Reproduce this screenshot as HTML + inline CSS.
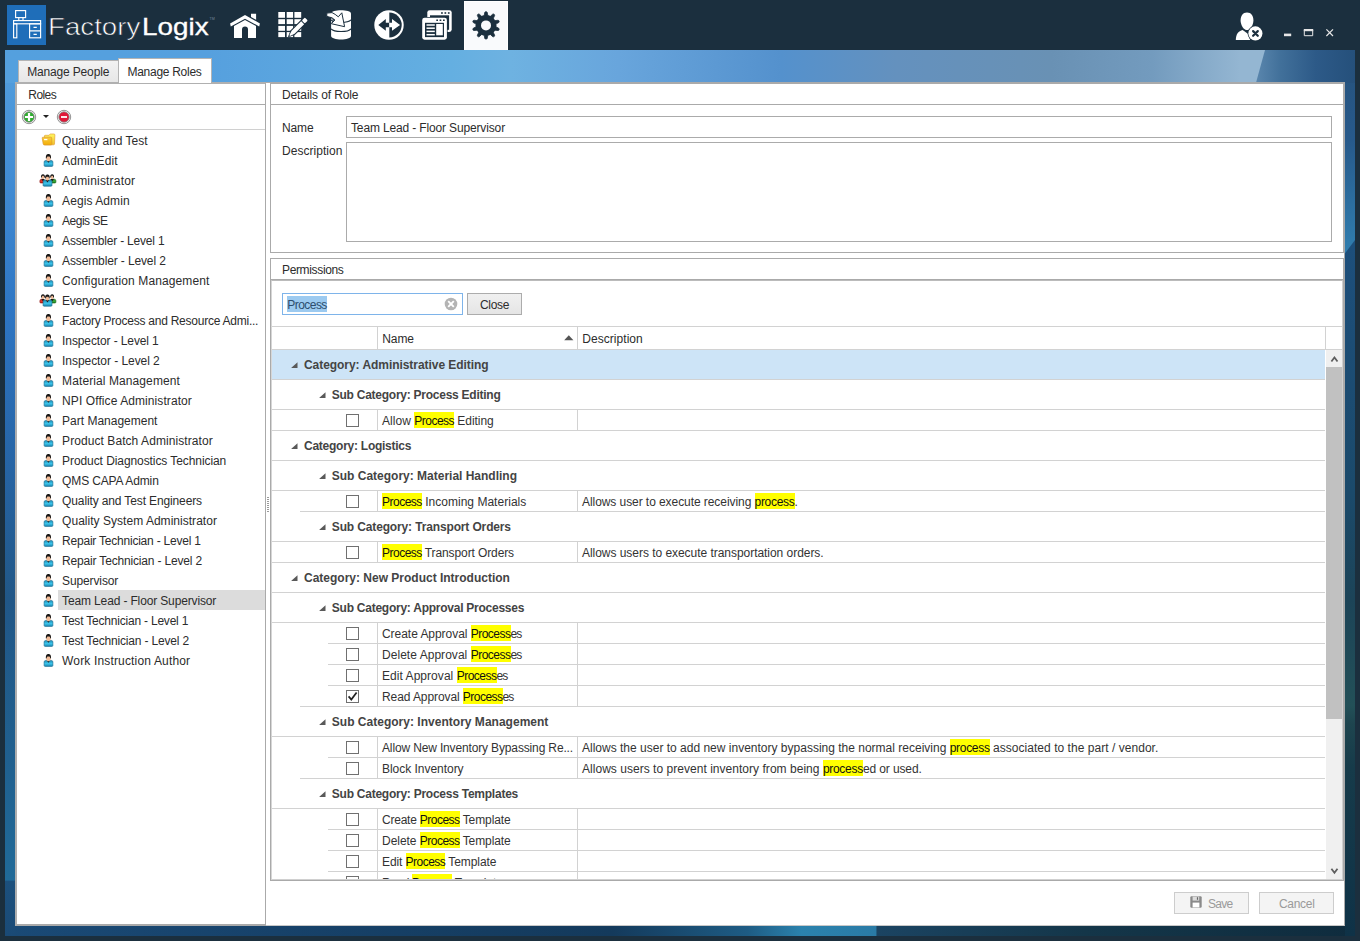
<!DOCTYPE html>
<html><head><meta charset="utf-8"><title>FactoryLogix</title>
<style>
*{box-sizing:border-box;margin:0;padding:0}
html,body{width:1360px;height:941px;overflow:hidden}
body{position:relative;background:#1b2f3e;font-family:"Liberation Sans",sans-serif;font-size:12px;color:#2c2c2c;-webkit-font-smoothing:antialiased}
.abs{position:absolute}
#hdr{position:absolute;left:0;top:0;width:1360px;height:50px;background:#1b2f3e}
#bg{position:absolute;left:5px;top:50px;width:1350px;height:886px}
.t{position:absolute;white-space:nowrap;line-height:16px;height:16px;letter-spacing:-0.1px}
.b{font-weight:bold;color:#444}
.line{position:absolute;background:#d4d4d4;height:1px}
.vline{position:absolute;background:#d4d4d4;width:1px}
.hl{background:#ffff00;color:#111;display:inline-block;height:16px;line-height:18px;vertical-align:top}
.cb{position:absolute;width:13px;height:13px;border:1px solid #707070;background:#fff}
</style></head>
<body>

<svg id="bg" class="abs" width="1350" height="886" viewBox="5 50 1350 886" style="left:5px;top:50px">
<defs>
<linearGradient id="gt" x1="5" x2="1355" y1="0" y2="0" gradientUnits="userSpaceOnUse">
<stop offset="0" stop-color="#54a0de"/>
<stop offset="0.15" stop-color="#56a0de"/>
<stop offset="0.33" stop-color="#64afe1"/>
<stop offset="0.375" stop-color="#6eb2e1"/>
<stop offset="0.455" stop-color="#68a5dc"/>
<stop offset="0.575" stop-color="#5491cd"/>
<stop offset="0.66" stop-color="#6491be"/>
<stop offset="0.775" stop-color="#6991b4"/>
<stop offset="0.85" stop-color="#739bbe"/>
<stop offset="0.915" stop-color="#94b6d2"/>
<stop offset="1" stop-color="#94b6d2"/>
</linearGradient>
<linearGradient id="gr" x1="1256" x2="1355" y1="0" y2="0" gradientUnits="userSpaceOnUse">
<stop offset="0" stop-color="#5a86ad"/>
<stop offset="0.25" stop-color="#41709a"/>
<stop offset="0.6" stop-color="#2d5a88"/>
<stop offset="1" stop-color="#25507b"/>
</linearGradient>
<linearGradient id="gl" x1="0" x2="0" y1="50" y2="936" gradientUnits="userSpaceOnUse">
<stop offset="0" stop-color="#54a0de"/>
<stop offset="0.12" stop-color="#4590d6"/>
<stop offset="0.29" stop-color="#2e76c4"/>
<stop offset="0.45" stop-color="#2766a8"/>
<stop offset="0.62" stop-color="#215787"/>
<stop offset="0.8" stop-color="#20608f"/>
<stop offset="0.937" stop-color="#206a98"/>
<stop offset="0.938" stop-color="#1c507d"/>
<stop offset="1" stop-color="#1a4a76"/>
</linearGradient>
<linearGradient id="grt" x1="0" x2="0" y1="50" y2="936" gradientUnits="userSpaceOnUse">
<stop offset="0" stop-color="#26527c"/>
<stop offset="0.1" stop-color="#27598a"/>
<stop offset="0.215" stop-color="#2f7aab"/>
<stop offset="0.24" stop-color="#3080b0"/>
<stop offset="0.5" stop-color="#1b4a6b"/>
<stop offset="0.62" stop-color="#1c4458"/>
<stop offset="0.74" stop-color="#235058"/>
<stop offset="0.76" stop-color="#1e454f"/>
<stop offset="0.81" stop-color="#163b4a"/>
<stop offset="1" stop-color="#0f3247"/>
</linearGradient>
<linearGradient id="grt2" x1="0" x2="0" y1="50" y2="936" gradientUnits="userSpaceOnUse">
<stop offset="0.21" stop-color="#1d4f7c"/>
<stop offset="0.5" stop-color="#1b4a6b"/>
<stop offset="0.62" stop-color="#1c4458"/>
<stop offset="0.74" stop-color="#235058"/>
<stop offset="0.76" stop-color="#1e454f"/>
<stop offset="0.81" stop-color="#163b4a"/>
<stop offset="1" stop-color="#0f3247"/>
</linearGradient>
<linearGradient id="gb" x1="5" x2="1355" y1="0" y2="0" gradientUnits="userSpaceOnUse">
<stop offset="0" stop-color="#1a4a76"/>
<stop offset="0.2" stop-color="#17426a"/>
<stop offset="0.45" stop-color="#143a5c"/>
<stop offset="0.55" stop-color="#1e5c84"/>
<stop offset="0.59" stop-color="#2b82ad"/>
<stop offset="0.645" stop-color="#2a7ba6"/>
<stop offset="0.646" stop-color="#1b4462"/>
<stop offset="0.8" stop-color="#143649"/>
<stop offset="1" stop-color="#0f2c3e"/>
</linearGradient>
</defs>
<rect x="5" y="50" width="1350" height="886" fill="url(#gt)"/>
<polygon points="1265,50 1355,50 1355,90 1254,90" fill="url(#gr)"/>
<rect x="5" y="83" width="12" height="853" fill="url(#gl)"/>
<rect x="1343" y="83" width="12" height="180" fill="url(#grt)"/>
<polygon points="1343,256 1355,240 1355,936 1343,936" fill="url(#grt2)"/>
<rect x="15" y="924" width="1330" height="12" fill="url(#gb)"/>
</svg>
<svg class="abs" width="0" height="0" style="left:0;top:0"><defs><linearGradient id="ub" x1="0" x2="0" y1="0" y2="1"><stop offset="0" stop-color="#1b86b0"/><stop offset="0.55" stop-color="#3cc4ea"/><stop offset="1" stop-color="#1b86b0"/></linearGradient><linearGradient id="ur" x1="0" x2="0" y1="0" y2="1"><stop offset="0" stop-color="#b01810"/><stop offset="0.55" stop-color="#f03a2e"/><stop offset="1" stop-color="#b01810"/></linearGradient><linearGradient id="ug" x1="0" x2="0" y1="0" y2="1"><stop offset="0" stop-color="#1c7a1c"/><stop offset="0.55" stop-color="#3cb03c"/><stop offset="1" stop-color="#1c7a1c"/></linearGradient><linearGradient id="ufg" x1="0" x2="0" y1="0" y2="1"><stop offset="0" stop-color="#f9cc40"/><stop offset="1" stop-color="#f3ae06"/></linearGradient><linearGradient id="ufb" x1="0" x2="0" y1="0" y2="1"><stop offset="0" stop-color="#fff85e"/><stop offset="1" stop-color="#f2c02c"/></linearGradient></defs></svg><div id="hdr"><svg class="abs" style="left:0;top:0" width="1360" height="50" viewBox="0 0 1360 50"><rect x="7" y="5" width="39" height="40" fill="#1f6eb9"/><g fill="none" stroke="#fff" stroke-width="1.15"><rect x="15.6" y="10.6" width="10" height="7"/><path d="M18.8 17.6V20.3M23 17.6V20.3"/><rect x="13.6" y="20.6" width="27" height="3.2"/><rect x="13.6" y="23.8" width="3.2" height="14"/><rect x="29.6" y="23.8" width="11" height="14"/><path d="M29.6 30.8H40.6M33.5 27.4H36.8M33.5 34.4H36.8"/></g><g fill="#fff"><polygon points="230.1,23.4 245,15 259.9,23.4 259.2,26.4 245,18.7 230.8,26.4"/><path d="M234 25.9 L245 19.9 L256 25.9 V38 H248 V29.4 A3 3 0 0 0 242 29.4 V38 H234Z"/><polygon points="251,13.8 256.1,13.8 256.1,19.8 251,17.1"/></g><g fill="#fff"><rect x="278.3" y="12" width="6.7" height="5.8"/><rect x="278.3" y="19.2" width="6.7" height="4.9"/><rect x="278.3" y="25.9" width="6.7" height="4.9"/><rect x="278.3" y="32.1" width="6.7" height="5.0"/><rect x="286.7" y="12" width="6.4" height="5.8"/><rect x="286.7" y="19.2" width="6.4" height="4.9"/><rect x="286.7" y="25.9" width="6.4" height="4.9"/><rect x="286.7" y="32.1" width="6.4" height="5.0"/><rect x="294.4" y="12" width="6.8" height="5.8"/><rect x="294.4" y="19.2" width="6.8" height="4.9"/><rect x="294.4" y="25.9" width="6.8" height="4.9"/><rect x="294.4" y="32.1" width="6.8" height="5.0"/></g><g transform="translate(288.3,37) rotate(-45)"><path d="M-0.8 0 L6.5 -3.2 H26.5 V3.2 H6.5Z" fill="#1b2f3e"/><path d="M0.4 0 L6.8 -2.1 H20.3 V2.1 H6.8Z" fill="#fff"/><path d="M0.4 0 L2 -0.7 V0.7Z" fill="#1b2f3e"/><rect x="21.2" y="-2.1" width="4.3" height="4.2" rx="1" fill="#fff"/></g><g><path d="M331.1 13.5 C331.1 9.2 351 9.2 351 13.5 V36 C351 40.6 331.1 40.6 331.1 36Z" fill="#fff"/><path d="M331.1 19.8 C334 23.2 348 23.2 351 19.8 M331.1 28.8 C334 32.4 348 32.4 351 28.8" fill="none" stroke="#1b2f3e" stroke-width="1.1"/><path d="M326.8 13.1 L332 12.6 L335.2 14.4 L338.3 16.8 L341.8 12.8 L344.6 26.7 L331.3 23.7 L334.8 20 L332 17.8 L326.8 16.4Z" fill="#fff" stroke="#1b2f3e" stroke-width="1" stroke-linejoin="miter"/><path d="M331.5 18.5 L334.6 20 L331.6 22.6" fill="none" stroke="#1b2f3e" stroke-width="0.9"/></g><g><circle cx="389" cy="25" r="14.7" fill="#fff"/><path d="M389.3 12.6 A12.4 12.4 0 0 1 389.3 37.4Z" fill="#1b2f3e"/><path d="M378.3 25 L385.8 19 V22.7 H389.3 V27.2 H385.8 V30.8Z" fill="#1b2f3e"/><path d="M400.1 25 L392 19 V22.7 H389.2 V27.2 H392 V30.8Z" fill="#fff"/></g><g><rect x="427.3" y="10.2" width="24.4" height="21.8" rx="2.4" fill="#fff"/><rect x="430" y="15.3" width="19.1" height="14.5" fill="#1b2f3e"/><rect x="441.1" y="12.2" width="1.7" height="1.6" fill="#1b2f3e"/><rect x="444.5" y="12.2" width="1.7" height="1.6" fill="#1b2f3e"/><rect x="447.9" y="12.2" width="1.7" height="1.6" fill="#1b2f3e"/><rect x="421.5" y="17" width="26.1" height="23.4" rx="3" fill="#1b2f3e"/><rect x="422.2" y="17.7" width="24.7" height="22" rx="2.4" fill="#fff"/><rect x="425" y="22.8" width="19" height="14.3" fill="#1b2f3e"/><rect x="436.3" y="19.5" width="1.7" height="1.5" fill="#1b2f3e"/><rect x="439.6" y="19.5" width="1.7" height="1.5" fill="#1b2f3e"/><rect x="443.0" y="19.5" width="1.7" height="1.5" fill="#1b2f3e"/><rect x="426.5" y="24.25" width="8.3" height="1.5" fill="#fff"/><rect x="426.5" y="27.45" width="8.3" height="1.5" fill="#fff"/><rect x="426.5" y="30.65" width="8.3" height="1.5" fill="#fff"/><rect x="426.5" y="33.95" width="8.3" height="1.5" fill="#fff"/><rect x="436.2" y="24" width="6.6" height="11.3" fill="#fff"/></g><rect x="464.5" y="1.5" width="43" height="49" fill="#f9fafc" stroke="#fff" stroke-width="1"/><path d="M483.67 15.68 L484.18 15.57 L484.81 12.35 L485.44 11.71 L486.56 11.71 L487.19 12.35 L487.82 15.57 L489.83 16.16 L490.31 16.37 L492.71 14.15 L493.59 14.00 L494.50 14.65 L494.63 15.54 L493.25 18.52 L494.53 20.18 L494.79 20.63 L498.04 20.24 L498.85 20.64 L499.19 21.70 L498.77 22.50 L495.91 24.09 L495.97 26.18 L495.91 26.71 L498.77 28.30 L499.19 29.10 L498.85 30.16 L498.04 30.56 L494.79 30.17 L493.60 31.89 L493.25 32.28 L494.63 35.26 L494.50 36.15 L493.59 36.80 L492.71 36.65 L490.31 34.43 L488.33 35.12 L487.82 35.23 L487.19 38.45 L486.56 39.09 L485.44 39.09 L484.81 38.45 L484.18 35.23 L482.17 34.64 L481.69 34.43 L479.29 36.65 L478.41 36.80 L477.50 36.15 L477.37 35.26 L478.75 32.28 L477.47 30.62 L477.21 30.17 L473.96 30.56 L473.15 30.16 L472.81 29.10 L473.23 28.30 L476.09 26.71 L476.03 24.62 L476.09 24.09 L473.23 22.50 L472.81 21.70 L473.15 20.64 L473.96 20.24 L477.21 20.63 L478.40 18.91 L478.75 18.52 L477.37 15.54 L477.50 14.65 L478.41 14.00 L479.29 14.15 L481.69 16.37Z" fill="#1b2f3e" stroke="#1b2f3e" stroke-width="0.8" stroke-linejoin="round"/><circle cx="486" cy="25.4" r="10.2" fill="#1b2f3e"/><circle cx="486" cy="25.4" r="5" fill="#f9fafc"/><g><path d="M1247 12.6 C1251.2 12.6 1253.4 16 1253.4 20.5 C1253.4 25.5 1250 30.1 1247 30.1 C1244 30.1 1240.6 25.5 1240.6 20.5 C1240.6 16 1242.8 12.6 1247 12.6Z" fill="#fff"/><path d="M1235.8 39.9 C1236 33.5 1238.5 31.2 1242.6 29.9 L1248.2 34 L1250.2 39.9Z" fill="#fff"/><circle cx="1255.4" cy="33.4" r="7.8" fill="#1b2f3e"/><circle cx="1255.4" cy="33.4" r="7.05" fill="#fff"/><path d="M1253.1 31.1 L1257.8 35.8 M1257.8 31.1 L1253.1 35.8" stroke="#1b2f3e" stroke-width="2.2" stroke-linecap="round"/></g><rect x="1284" y="33.6" width="7.2" height="2.6" fill="#e6e6e6"/><path d="M1304.3 30 H1312.7 V35.7 H1304.3Z" fill="none" stroke="#e6e6e6" stroke-width="1"/><rect x="1303.8" y="29" width="9.4" height="2.2" fill="#e6e6e6"/><path d="M1326.4 29.4 L1333 36 M1333 29.4 L1326.4 36" stroke="#e6e6e6" stroke-width="1.2"/></svg><div class="abs" style="left:48.2px;top:11px;height:32px;line-height:32px;font-size:23.4px;color:#fff;white-space:nowrap"><span style="display:inline-block;transform-origin:0 50%;transform:scaleX(1.184);-webkit-text-stroke:0.6px #1b2f3e">Factory</span></div><div class="abs" style="left:141.9px;top:11px;height:32px;line-height:32px;font-size:23.4px;color:#fff;white-space:nowrap"><span style="display:inline-block;transform-origin:0 50%;transform:scaleX(1.19);-webkit-text-stroke:0.3px #fff">Logix</span></div><div class="abs" style="left:209.5px;top:17px;font-size:3.6px;line-height:5px;color:#74889a;letter-spacing:0">TM</div></div><div class="abs" style="left:266px;top:82px;width:1079px;height:844px;background:#fff;border-top:1px solid #aaa;border-right:1px solid #aaa;border-bottom:1px solid #c8c8c8"></div><div class="abs" style="left:270px;top:83px;width:1074px;height:170px;border:1px solid #aaa;background:#fff"></div><div class="t" style="left:282px;top:87px;"><span style="letter-spacing:-0.110px;">Details of Role</span></div><div class="abs" style="left:271px;top:104px;width:1072px;height:1px;background:#aaa"></div><div class="t" style="left:282px;top:120px;"><span style="letter-spacing:-0.129px;">Name</span></div><div class="abs" style="left:346px;top:116px;width:986px;height:22px;border:1px solid #ababab;background:#fff"></div><div class="t" style="left:351px;top:120px;"><span style="letter-spacing:-0.146px;">Team Lead - Floor Supervisor</span></div><div class="t" style="left:282px;top:143px;"><span style="letter-spacing:0.043px;">Description</span></div><div class="abs" style="left:346px;top:142px;width:986px;height:100px;border:1px solid #ababab;background:#fff"></div><div class="abs" style="left:270px;top:258px;width:1074px;height:623px;border:1px solid #aaa;background:#fff"></div><div class="t" style="left:282px;top:262px;"><span style="letter-spacing:-0.351px;">Permissions</span></div><div class="abs" style="left:271px;top:279px;width:1072px;height:1px;background:#aaa"></div><div class="abs" style="left:271px;top:280px;width:1072px;height:600px;border:1px solid #d0d0d0;border-top-color:#bbb;border-left-color:#d6d6d6"></div><div class="abs" style="left:282px;top:293px;width:181px;height:22px;border:1px solid #7eb4ea;background:#fff"></div><div class="abs" style="left:287px;top:296px;width:40px;height:16px;background:#9ccaf0"></div><div class="t" style="left:287.3px;top:297px;color:#2d4d6d;"><span style="letter-spacing:-0.551px;">Process</span></div><svg class="abs" style="left:444px;top:297px" width="14" height="14" viewBox="-7 -7 14 14"><circle r="6.3" fill="#b4b4b4"/><path d="M-2.8 -2.8 L2.8 2.8 M2.8 -2.8 L-2.8 2.8" stroke="#fff" stroke-width="1.9"/></svg><div class="abs" style="left:467px;top:293px;width:55px;height:22px;border:1px solid #acacac;background:linear-gradient(#f0f0f0,#e5e5e5)"></div><div class="t" style="left:480px;top:297px;"><span style="letter-spacing:-0.338px;">Close</span></div><div class="line" style="left:272px;top:326px;width:1070px;background:#d2d2d2"></div><div class="line" style="left:272px;top:349px;width:1070px;background:#d2d2d2"></div><div class="vline" style="left:377px;top:327px;height:22px;background:#d2d2d2"></div><div class="vline" style="left:577px;top:327px;height:22px;background:#d2d2d2"></div><div class="vline" style="left:1325px;top:327px;height:22px;background:#d2d2d2"></div><div class="t" style="left:382.3px;top:331px;"><span style="letter-spacing:-0.129px;">Name</span></div><div class="t" style="left:582.3px;top:331px;"><span style="letter-spacing:0.043px;">Description</span></div><svg class="abs" style="left:564px;top:335px" width="10" height="6" viewBox="0 0 10 6"><path d="M0.2 5.2 L4.8 0.2 L9.4 5.2Z" fill="#555"/></svg><div class="abs" style="left:0;top:0;width:1360px;height:879px;overflow:hidden"><div class="abs" style="left:272px;top:350px;width:1053px;height:29px;background:#cde4f7"></div><svg class="abs" style="left:291px;top:362px" width="7" height="7" viewBox="0 0 7 7"><path d="M6.5 0.2 V6 H0.1Z" fill="#595959"/></svg><div class="t b" style="left:304px;top:357px;"><span style="letter-spacing:-0.052px;">Category: Administrative Editing</span></div><div class="line" style="left:272px;top:379px;width:1053px;background:#d2d2d2"></div><svg class="abs" style="left:319px;top:392px" width="7" height="7" viewBox="0 0 7 7"><path d="M6.5 0.2 V6 H0.1Z" fill="#595959"/></svg><div class="t b" style="left:331.8px;top:387px;"><span style="letter-spacing:-0.253px;">Sub Category: Process Editing</span></div><div class="line" style="left:272px;top:409px;width:1053px;background:#d2d2d2"></div><div class="cb" style="left:346px;top:414px"></div><div class="vline" style="left:377px;top:410px;height:20px;background:#d2d2d2"></div><div class="vline" style="left:577px;top:410px;height:20px;background:#d2d2d2"></div><div class="t" style="left:382px;top:412px;color:#333;line-height:18px;height:18px;"><span style="letter-spacing:0.047px;">Allow </span><span class="hl" style="letter-spacing:-0.508px;">Process</span><span style="letter-spacing:-0.066px;"> Editing</span></div><div class="line" style="left:272px;top:430px;width:1053px;background:#d2d2d2"></div><svg class="abs" style="left:291px;top:443px" width="7" height="7" viewBox="0 0 7 7"><path d="M6.5 0.2 V6 H0.1Z" fill="#595959"/></svg><div class="t b" style="left:304px;top:438px;"><span style="letter-spacing:-0.254px;">Category: Logistics</span></div><div class="line" style="left:272px;top:460px;width:1053px;background:#d2d2d2"></div><svg class="abs" style="left:319px;top:473px" width="7" height="7" viewBox="0 0 7 7"><path d="M6.5 0.2 V6 H0.1Z" fill="#595959"/></svg><div class="t b" style="left:331.8px;top:468px;"><span style="letter-spacing:-0.005px;">Sub Category: Material Handling</span></div><div class="line" style="left:272px;top:490px;width:1053px;background:#d2d2d2"></div><div class="cb" style="left:346px;top:495px"></div><div class="vline" style="left:377px;top:491px;height:20px;background:#d2d2d2"></div><div class="vline" style="left:577px;top:491px;height:20px;background:#d2d2d2"></div><div class="t" style="left:382px;top:493px;color:#333;line-height:18px;height:18px;"><span class="hl" style="letter-spacing:-0.508px;">Process</span><span style="letter-spacing:0.024px;"> Incoming Materials</span></div><div class="t" style="left:582px;top:493px;color:#333;line-height:18px;height:18px;"><span style="letter-spacing:-0.068px;">Allows user to execute receiving </span><span class="hl" style="letter-spacing:-0.290px;">process</span><span style="letter-spacing:-0.544px;">.</span></div><div class="line" style="left:300px;top:511px;width:1025px;background:#d2d2d2"></div><svg class="abs" style="left:319px;top:524px" width="7" height="7" viewBox="0 0 7 7"><path d="M6.5 0.2 V6 H0.1Z" fill="#595959"/></svg><div class="t b" style="left:331.8px;top:519px;"><span style="letter-spacing:-0.142px;">Sub Category: Transport Orders</span></div><div class="line" style="left:272px;top:541px;width:1053px;background:#d2d2d2"></div><div class="cb" style="left:346px;top:546px"></div><div class="vline" style="left:377px;top:542px;height:20px;background:#d2d2d2"></div><div class="vline" style="left:577px;top:542px;height:20px;background:#d2d2d2"></div><div class="t" style="left:382px;top:544px;color:#333;line-height:18px;height:18px;"><span class="hl" style="letter-spacing:-0.508px;">Process</span><span style="letter-spacing:-0.108px;"> Transport Orders</span></div><div class="t" style="left:582px;top:544px;color:#333;line-height:18px;height:18px;"><span style="letter-spacing:-0.040px;">Allows users to execute transportation orders.</span></div><div class="line" style="left:272px;top:562px;width:1053px;background:#d2d2d2"></div><svg class="abs" style="left:291px;top:575px" width="7" height="7" viewBox="0 0 7 7"><path d="M6.5 0.2 V6 H0.1Z" fill="#595959"/></svg><div class="t b" style="left:304px;top:570px;"><span style="letter-spacing:-0.003px;">Category: New Product Introduction</span></div><div class="line" style="left:272px;top:592px;width:1053px;background:#d2d2d2"></div><svg class="abs" style="left:319px;top:605px" width="7" height="7" viewBox="0 0 7 7"><path d="M6.5 0.2 V6 H0.1Z" fill="#595959"/></svg><div class="t b" style="left:331.8px;top:600px;"><span style="letter-spacing:-0.248px;">Sub Category: Approval Processes</span></div><div class="line" style="left:272px;top:622px;width:1053px;background:#d2d2d2"></div><div class="cb" style="left:346px;top:627px"></div><div class="vline" style="left:377px;top:623px;height:20px;background:#d2d2d2"></div><div class="vline" style="left:577px;top:623px;height:20px;background:#d2d2d2"></div><div class="t" style="left:382px;top:625px;color:#333;line-height:18px;height:18px;"><span style="letter-spacing:-0.043px;">Create Approval </span><span class="hl" style="letter-spacing:-0.508px;">Process</span><span style="letter-spacing:-0.944px;">es</span></div><div class="line" style="left:328px;top:643px;width:997px;background:#d2d2d2"></div><div class="cb" style="left:346px;top:648px"></div><div class="vline" style="left:377px;top:644px;height:20px;background:#d2d2d2"></div><div class="vline" style="left:577px;top:644px;height:20px;background:#d2d2d2"></div><div class="t" style="left:382px;top:646px;color:#333;line-height:18px;height:18px;"><span style="letter-spacing:0.040px;">Delete Approval </span><span class="hl" style="letter-spacing:-0.508px;">Process</span><span style="letter-spacing:-0.944px;">es</span></div><div class="line" style="left:328px;top:664px;width:997px;background:#d2d2d2"></div><div class="cb" style="left:346px;top:669px"></div><div class="vline" style="left:377px;top:665px;height:20px;background:#d2d2d2"></div><div class="vline" style="left:577px;top:665px;height:20px;background:#d2d2d2"></div><div class="t" style="left:382px;top:667px;color:#333;line-height:18px;height:18px;"><span style="letter-spacing:0.047px;">Edit Approval </span><span class="hl" style="letter-spacing:-0.508px;">Process</span><span style="letter-spacing:-0.944px;">es</span></div><div class="line" style="left:328px;top:685px;width:997px;background:#d2d2d2"></div><div class="cb" style="left:346px;top:690px"><svg width="11" height="11" viewBox="0 0 11 11" style="position:absolute;left:0;top:0"><path d="M1.6 5.4 L4.3 8.6 L9.6 1.4" fill="none" stroke="#222" stroke-width="1.7"/></svg></div><div class="vline" style="left:377px;top:686px;height:20px;background:#d2d2d2"></div><div class="vline" style="left:577px;top:686px;height:20px;background:#d2d2d2"></div><div class="t" style="left:382px;top:688px;color:#333;line-height:18px;height:18px;"><span style="letter-spacing:-0.090px;">Read Approval </span><span class="hl" style="letter-spacing:-0.508px;">Process</span><span style="letter-spacing:-0.944px;">es</span></div><div class="line" style="left:300px;top:706px;width:1025px;background:#d2d2d2"></div><svg class="abs" style="left:319px;top:719px" width="7" height="7" viewBox="0 0 7 7"><path d="M6.5 0.2 V6 H0.1Z" fill="#595959"/></svg><div class="t b" style="left:331.8px;top:714px;"><span style="letter-spacing:0.016px;">Sub Category: Inventory Management</span></div><div class="line" style="left:272px;top:736px;width:1053px;background:#d2d2d2"></div><div class="cb" style="left:346px;top:741px"></div><div class="vline" style="left:377px;top:737px;height:20px;background:#d2d2d2"></div><div class="vline" style="left:577px;top:737px;height:20px;background:#d2d2d2"></div><div class="t" style="left:382px;top:739px;color:#333;line-height:18px;height:18px;"><span style="letter-spacing:-0.146px;">Allow New Inventory Bypassing Re...</span></div><div class="t" style="left:582px;top:739px;color:#333;line-height:18px;height:18px;"><span style="letter-spacing:0.002px;">Allows the user to add new inventory bypassing the normal receiving </span><span class="hl" style="letter-spacing:-0.290px;">process</span><span style="letter-spacing:0.038px;"> associated to the part / vendor.</span></div><div class="line" style="left:328px;top:757px;width:997px;background:#d2d2d2"></div><div class="cb" style="left:346px;top:762px"></div><div class="vline" style="left:377px;top:758px;height:20px;background:#d2d2d2"></div><div class="vline" style="left:577px;top:758px;height:20px;background:#d2d2d2"></div><div class="t" style="left:382px;top:760px;color:#333;line-height:18px;height:18px;"><span style="letter-spacing:-0.030px;">Block Inventory</span></div><div class="t" style="left:582px;top:760px;color:#333;line-height:18px;height:18px;"><span style="letter-spacing:0.032px;">Allows users to prevent inventory from being </span><span class="hl" style="letter-spacing:-0.290px;">process</span><span style="letter-spacing:-0.113px;">ed or used.</span></div><div class="line" style="left:300px;top:778px;width:1025px;background:#d2d2d2"></div><svg class="abs" style="left:319px;top:791px" width="7" height="7" viewBox="0 0 7 7"><path d="M6.5 0.2 V6 H0.1Z" fill="#595959"/></svg><div class="t b" style="left:331.8px;top:786px;"><span style="letter-spacing:-0.247px;">Sub Category: Process Templates</span></div><div class="line" style="left:272px;top:808px;width:1053px;background:#d2d2d2"></div><div class="cb" style="left:346px;top:813px"></div><div class="vline" style="left:377px;top:809px;height:20px;background:#d2d2d2"></div><div class="vline" style="left:577px;top:809px;height:20px;background:#d2d2d2"></div><div class="t" style="left:382px;top:811px;color:#333;line-height:18px;height:18px;"><span style="letter-spacing:-0.223px;">Create </span><span class="hl" style="letter-spacing:-0.508px;">Process</span><span style="letter-spacing:-0.079px;"> Template</span></div><div class="line" style="left:328px;top:829px;width:997px;background:#d2d2d2"></div><div class="cb" style="left:346px;top:834px"></div><div class="vline" style="left:377px;top:830px;height:20px;background:#d2d2d2"></div><div class="vline" style="left:577px;top:830px;height:20px;background:#d2d2d2"></div><div class="t" style="left:382px;top:832px;color:#333;line-height:18px;height:18px;"><span style="letter-spacing:-0.033px;">Delete </span><span class="hl" style="letter-spacing:-0.508px;">Process</span><span style="letter-spacing:-0.079px;"> Template</span></div><div class="line" style="left:328px;top:850px;width:997px;background:#d2d2d2"></div><div class="cb" style="left:346px;top:855px"></div><div class="vline" style="left:377px;top:851px;height:20px;background:#d2d2d2"></div><div class="vline" style="left:577px;top:851px;height:20px;background:#d2d2d2"></div><div class="t" style="left:382px;top:853px;color:#333;line-height:18px;height:18px;"><span style="letter-spacing:-0.103px;">Edit </span><span class="hl" style="letter-spacing:-0.508px;">Process</span><span style="letter-spacing:-0.079px;"> Template</span></div><div class="line" style="left:328px;top:871px;width:997px;background:#d2d2d2"></div><div class="cb" style="left:346px;top:876px"></div><div class="vline" style="left:377px;top:872px;height:20px;background:#d2d2d2"></div><div class="vline" style="left:577px;top:872px;height:20px;background:#d2d2d2"></div><div class="t" style="left:382px;top:874px;color:#333;line-height:18px;height:18px;"><span style="letter-spacing:-0.426px;">Read </span><span class="hl" style="letter-spacing:-0.508px;">Process</span><span style="letter-spacing:-0.079px;"> Template</span></div><div class="line" style="left:272px;top:892px;width:1053px;background:#d2d2d2"></div></div><div class="abs" style="left:1326px;top:350px;width:16px;height:529px;background:#f0f0f0"></div><div class="abs" style="left:1326px;top:367px;width:16px;height:352px;background:#c1c1c1"></div><svg class="abs" style="left:1330px;top:355px" width="10" height="8" viewBox="0 0 10 8"><path d="M1.4 6.5 L4.45 2.5 L7.5 6.5" fill="none" stroke="#5e5e5e" stroke-width="1.8"/></svg><svg class="abs" style="left:1330px;top:867px" width="10" height="8" viewBox="0 0 10 8"><path d="M1.4 1.7 L4.45 5.7 L7.5 1.7" fill="none" stroke="#5e5e5e" stroke-width="1.8"/></svg><div class="abs" style="left:1174px;top:892px;width:75px;height:22px;border:1px solid #cdcdcd;background:#f4f4f4"></div><svg class="abs" style="left:1190px;top:896px" width="12" height="12" viewBox="0 0 12 12"><rect x="0.3" y="0.3" width="11.4" height="11.4" rx="1.2" fill="#8a8a8a"/><rect x="2.6" y="0.6" width="6.6" height="4" fill="#dcdcdc"/><rect x="6.9" y="1.2" width="1.2" height="2.6" fill="#666"/><rect x="2.6" y="6.6" width="6.8" height="4.8" fill="#fff"/></svg><div class="t" style="left:1208px;top:896px;color:#9a9a9a;"><span style="letter-spacing:-0.715px;">Save</span></div><div class="abs" style="left:1259px;top:892px;width:75px;height:22px;border:1px solid #cdcdcd;background:#f4f4f4"></div><div class="t" style="left:1279px;top:896px;color:#9a9a9a;"><span style="letter-spacing:-0.310px;">Cancel</span></div><div class="abs" style="left:18px;top:60px;width:101px;height:24px;background:linear-gradient(#f2f2f2,#e6e6e6);border:1px solid #b4b4b4;border-bottom:none"></div><div class="t" style="left:27.2px;top:64px;"><span style="letter-spacing:-0.160px;">Manage People</span></div><div class="abs" style="left:118px;top:58px;width:94px;height:27px;background:#fff;border:1px solid #b4b4b4;border-bottom:none"></div><div class="t" style="left:127.5px;top:64px;"><span style="letter-spacing:-0.283px;">Manage Roles</span></div><div class="abs" style="left:15px;top:82px;width:251px;height:844px;background:#fff;border:1px solid #aaa;border-left:2px solid #aeaeae;border-top:2px solid #b0b0b0;border-bottom:2px solid #aaa"></div><div class="abs" style="left:119px;top:82px;width:92px;height:1px;background:#fff"></div><div class="t" style="left:28.3px;top:87px;"><span style="letter-spacing:-0.577px;">Roles</span></div><div class="abs" style="left:17px;top:104px;width:248px;height:1px;background:#aaa"></div><svg class="abs" style="left:21.0px;top:109.0px" width="16" height="16" viewBox="-8 -8 16 16"><circle r="6.7" fill="#f4f4f4" stroke="#7a7a7a" stroke-width="0.8"/><circle r="5.2" fill="#2fae2f" stroke="#8a8a8a" stroke-width="0.8"/><path d="M-1.1 -4 H1.1 V-1.1 H4 V1.1 H1.1 V4 H-1.1 V1.1 H-4 V-1.1 H-1.1Z" fill="#fff"/></svg><svg class="abs" style="left:42px;top:113px" width="8" height="6" viewBox="0 0 8 6"><path d="M1 2 H7 L4 5Z" fill="#222"/></svg><svg class="abs" style="left:56.0px;top:109.0px" width="16" height="16" viewBox="-8 -8 16 16"><circle r="6.7" fill="#f4f4f4" stroke="#7a7a7a" stroke-width="0.8"/><circle r="5.2" fill="#e01838" stroke="#8a8a8a" stroke-width="0.8"/><rect x="-3" y="-0.9" width="6" height="1.8" fill="#fff"/></svg><div class="abs" style="left:17px;top:129px;width:248px;height:1px;background:#d0d0d0"></div><svg class="abs" style="left:41px;top:133px" width="16" height="14" viewBox="0 0 16 14"><path d="M3.5 2.8 Q3.5 2.3 4 2.3 L8 2.3 L8.8 1.3 Q9 1 9.4 1 L13 1 Q13.9 1 13.9 2 L13.5 11 Q13.4 11.8 12.6 11.8 L3.5 11.8Z" fill="url(#ufb)" stroke="#e2a23a" stroke-width="0.7"/><path d="M1.2 5 Q1.1 4.2 2 4.2 L9.8 4.2 Q10.7 4.2 10.7 5 L10.9 11 Q10.9 11.9 10 11.9 L3.2 11.9 Q2.4 11.9 2.2 11Z" fill="url(#ufg)" stroke="#dd9a2e" stroke-width="0.7"/><rect x="3.1" y="5.9" width="3.3" height="1.3" fill="#fff"/></svg><div class="t" style="left:62.1px;top:133px;"><span style="letter-spacing:-0.030px;">Quality and Test</span></div><svg class="abs" style="left:40px;top:153px" width="16" height="16" viewBox="0 0 16 16"><path d="M4.10 12.60 V9.00 Q4.10 7.60 5.70 7.40 L8.45 7.20 L11.30 7.40 Q12.90 7.60 12.90 9.00 V12.60 Q12.90 13.40 11.90 13.40 H5.10 Q4.10 13.40 4.10 12.60Z" fill="url(#ub)" stroke="#176a8c" stroke-width="0.6"/><path d="M6.75 7.30 L8.45 9.80 L10.15 7.30Z" fill="#1a1a1a"/><ellipse cx="8.45" cy="4.90" rx="2.30" ry="3.30" fill="#f2bc98"/><path d="M5.90 5.50 C5.60 1.60 7.05 0.90 8.45 0.90 C9.85 0.90 11.30 1.60 11.00 5.50 L10.20 5.30 C10.20 4.00 9.80 3.60 8.45 3.60 C7.10 3.60 6.70 4.00 6.70 5.30Z" fill="#161616"/></svg><div class="t" style="left:62.1px;top:153px;"><span style="letter-spacing:0.100px;">AdminEdit</span></div><svg class="abs" style="left:39px;top:173px" width="18" height="16" viewBox="0 0 18 16"><path d="M0.90 9.20 V7.80 Q0.90 6.40 2.50 6.20 L4.00 6.00 L4.00 6.20 Q5.60 6.40 5.60 7.80 V9.20 Q5.60 10.00 4.60 10.00 H1.90 Q0.90 10.00 0.90 9.20Z" fill="url(#ur)" stroke="#8c1610" stroke-width="0.6"/><path d="M2.30 6.10 L4.00 8.60 L5.70 6.10Z" fill="#1a1a1a"/><ellipse cx="4.00" cy="4.00" rx="1.60" ry="2.10" fill="#f2bc98"/><path d="M2.15 4.60 C1.85 1.90 2.60 1.20 4.00 1.20 C5.40 1.20 6.15 1.90 5.85 4.60 L5.05 4.40 C5.05 3.10 4.65 2.70 4.00 2.70 C3.35 2.70 2.95 3.10 2.95 4.40Z" fill="#161616"/><path d="M11.20 9.20 V7.80 Q11.20 6.40 12.80 6.20 L13.15 6.00 L15.30 6.20 Q16.90 6.40 16.90 7.80 V9.20 Q16.90 10.00 15.90 10.00 H12.20 Q11.20 10.00 11.20 9.20Z" fill="url(#ug)" stroke="#176017" stroke-width="0.6"/><path d="M11.45 6.10 L13.15 8.60 L14.85 6.10Z" fill="#1a1a1a"/><ellipse cx="13.15" cy="4.00" rx="1.60" ry="2.10" fill="#f2bc98"/><path d="M11.30 4.60 C11.00 1.90 11.75 1.20 13.15 1.20 C14.55 1.20 15.30 1.90 15.00 4.60 L14.20 4.40 C14.20 3.10 13.80 2.70 13.15 2.70 C12.50 2.70 12.10 3.10 12.10 4.40Z" fill="#161616"/><path d="M4.10 12.40 V8.60 Q4.10 7.20 5.70 7.00 L8.45 6.80 L11.40 7.00 Q13.00 7.20 13.00 8.60 V12.40 Q13.00 13.20 12.00 13.20 H5.10 Q4.10 13.20 4.10 12.40Z" fill="url(#ub)" stroke="#176a8c" stroke-width="0.6"/><path d="M6.75 6.90 L8.45 9.40 L10.15 6.90Z" fill="#1a1a1a"/><ellipse cx="8.45" cy="4.95" rx="2.00" ry="2.65" fill="#f2bc98"/><path d="M6.20 5.55 C5.90 2.30 7.05 1.60 8.45 1.60 C9.85 1.60 11.00 2.30 10.70 5.55 L9.90 5.35 C9.90 4.05 9.50 3.65 8.45 3.65 C7.40 3.65 7.00 4.05 7.00 5.35Z" fill="#161616"/></svg><div class="t" style="left:62.1px;top:173px;"><span style="letter-spacing:0.186px;">Administrator</span></div><svg class="abs" style="left:40px;top:193px" width="16" height="16" viewBox="0 0 16 16"><path d="M4.10 12.60 V9.00 Q4.10 7.60 5.70 7.40 L8.45 7.20 L11.30 7.40 Q12.90 7.60 12.90 9.00 V12.60 Q12.90 13.40 11.90 13.40 H5.10 Q4.10 13.40 4.10 12.60Z" fill="url(#ub)" stroke="#176a8c" stroke-width="0.6"/><path d="M6.75 7.30 L8.45 9.80 L10.15 7.30Z" fill="#1a1a1a"/><ellipse cx="8.45" cy="4.90" rx="2.30" ry="3.30" fill="#f2bc98"/><path d="M5.90 5.50 C5.60 1.60 7.05 0.90 8.45 0.90 C9.85 0.90 11.30 1.60 11.00 5.50 L10.20 5.30 C10.20 4.00 9.80 3.60 8.45 3.60 C7.10 3.60 6.70 4.00 6.70 5.30Z" fill="#161616"/></svg><div class="t" style="left:62.1px;top:193px;"><span style="letter-spacing:0.082px;">Aegis Admin</span></div><svg class="abs" style="left:40px;top:213px" width="16" height="16" viewBox="0 0 16 16"><path d="M4.10 12.60 V9.00 Q4.10 7.60 5.70 7.40 L8.45 7.20 L11.30 7.40 Q12.90 7.60 12.90 9.00 V12.60 Q12.90 13.40 11.90 13.40 H5.10 Q4.10 13.40 4.10 12.60Z" fill="url(#ub)" stroke="#176a8c" stroke-width="0.6"/><path d="M6.75 7.30 L8.45 9.80 L10.15 7.30Z" fill="#1a1a1a"/><ellipse cx="8.45" cy="4.90" rx="2.30" ry="3.30" fill="#f2bc98"/><path d="M5.90 5.50 C5.60 1.60 7.05 0.90 8.45 0.90 C9.85 0.90 11.30 1.60 11.00 5.50 L10.20 5.30 C10.20 4.00 9.80 3.60 8.45 3.60 C7.10 3.60 6.70 4.00 6.70 5.30Z" fill="#161616"/></svg><div class="t" style="left:62.1px;top:213px;"><span style="letter-spacing:-0.501px;">Aegis SE</span></div><svg class="abs" style="left:40px;top:233px" width="16" height="16" viewBox="0 0 16 16"><path d="M4.10 12.60 V9.00 Q4.10 7.60 5.70 7.40 L8.45 7.20 L11.30 7.40 Q12.90 7.60 12.90 9.00 V12.60 Q12.90 13.40 11.90 13.40 H5.10 Q4.10 13.40 4.10 12.60Z" fill="url(#ub)" stroke="#176a8c" stroke-width="0.6"/><path d="M6.75 7.30 L8.45 9.80 L10.15 7.30Z" fill="#1a1a1a"/><ellipse cx="8.45" cy="4.90" rx="2.30" ry="3.30" fill="#f2bc98"/><path d="M5.90 5.50 C5.60 1.60 7.05 0.90 8.45 0.90 C9.85 0.90 11.30 1.60 11.00 5.50 L10.20 5.30 C10.20 4.00 9.80 3.60 8.45 3.60 C7.10 3.60 6.70 4.00 6.70 5.30Z" fill="#161616"/></svg><div class="t" style="left:62.1px;top:233px;"><span style="letter-spacing:-0.195px;">Assembler - Level 1</span></div><svg class="abs" style="left:40px;top:253px" width="16" height="16" viewBox="0 0 16 16"><path d="M4.10 12.60 V9.00 Q4.10 7.60 5.70 7.40 L8.45 7.20 L11.30 7.40 Q12.90 7.60 12.90 9.00 V12.60 Q12.90 13.40 11.90 13.40 H5.10 Q4.10 13.40 4.10 12.60Z" fill="url(#ub)" stroke="#176a8c" stroke-width="0.6"/><path d="M6.75 7.30 L8.45 9.80 L10.15 7.30Z" fill="#1a1a1a"/><ellipse cx="8.45" cy="4.90" rx="2.30" ry="3.30" fill="#f2bc98"/><path d="M5.90 5.50 C5.60 1.60 7.05 0.90 8.45 0.90 C9.85 0.90 11.30 1.60 11.00 5.50 L10.20 5.30 C10.20 4.00 9.80 3.60 8.45 3.60 C7.10 3.60 6.70 4.00 6.70 5.30Z" fill="#161616"/></svg><div class="t" style="left:62.1px;top:253px;"><span style="letter-spacing:-0.129px;">Assembler - Level 2</span></div><svg class="abs" style="left:40px;top:273px" width="16" height="16" viewBox="0 0 16 16"><path d="M4.10 12.60 V9.00 Q4.10 7.60 5.70 7.40 L8.45 7.20 L11.30 7.40 Q12.90 7.60 12.90 9.00 V12.60 Q12.90 13.40 11.90 13.40 H5.10 Q4.10 13.40 4.10 12.60Z" fill="url(#ub)" stroke="#176a8c" stroke-width="0.6"/><path d="M6.75 7.30 L8.45 9.80 L10.15 7.30Z" fill="#1a1a1a"/><ellipse cx="8.45" cy="4.90" rx="2.30" ry="3.30" fill="#f2bc98"/><path d="M5.90 5.50 C5.60 1.60 7.05 0.90 8.45 0.90 C9.85 0.90 11.30 1.60 11.00 5.50 L10.20 5.30 C10.20 4.00 9.80 3.60 8.45 3.60 C7.10 3.60 6.70 4.00 6.70 5.30Z" fill="#161616"/></svg><div class="t" style="left:62.1px;top:273px;"><span style="letter-spacing:0.108px;">Configuration Management</span></div><svg class="abs" style="left:39px;top:293px" width="18" height="16" viewBox="0 0 18 16"><path d="M0.90 9.20 V7.80 Q0.90 6.40 2.50 6.20 L4.00 6.00 L4.00 6.20 Q5.60 6.40 5.60 7.80 V9.20 Q5.60 10.00 4.60 10.00 H1.90 Q0.90 10.00 0.90 9.20Z" fill="url(#ur)" stroke="#8c1610" stroke-width="0.6"/><path d="M2.30 6.10 L4.00 8.60 L5.70 6.10Z" fill="#1a1a1a"/><ellipse cx="4.00" cy="4.00" rx="1.60" ry="2.10" fill="#f2bc98"/><path d="M2.15 4.60 C1.85 1.90 2.60 1.20 4.00 1.20 C5.40 1.20 6.15 1.90 5.85 4.60 L5.05 4.40 C5.05 3.10 4.65 2.70 4.00 2.70 C3.35 2.70 2.95 3.10 2.95 4.40Z" fill="#161616"/><path d="M11.20 9.20 V7.80 Q11.20 6.40 12.80 6.20 L13.15 6.00 L15.30 6.20 Q16.90 6.40 16.90 7.80 V9.20 Q16.90 10.00 15.90 10.00 H12.20 Q11.20 10.00 11.20 9.20Z" fill="url(#ug)" stroke="#176017" stroke-width="0.6"/><path d="M11.45 6.10 L13.15 8.60 L14.85 6.10Z" fill="#1a1a1a"/><ellipse cx="13.15" cy="4.00" rx="1.60" ry="2.10" fill="#f2bc98"/><path d="M11.30 4.60 C11.00 1.90 11.75 1.20 13.15 1.20 C14.55 1.20 15.30 1.90 15.00 4.60 L14.20 4.40 C14.20 3.10 13.80 2.70 13.15 2.70 C12.50 2.70 12.10 3.10 12.10 4.40Z" fill="#161616"/><path d="M4.10 12.40 V8.60 Q4.10 7.20 5.70 7.00 L8.45 6.80 L11.40 7.00 Q13.00 7.20 13.00 8.60 V12.40 Q13.00 13.20 12.00 13.20 H5.10 Q4.10 13.20 4.10 12.40Z" fill="url(#ub)" stroke="#176a8c" stroke-width="0.6"/><path d="M6.75 6.90 L8.45 9.40 L10.15 6.90Z" fill="#1a1a1a"/><ellipse cx="8.45" cy="4.95" rx="2.00" ry="2.65" fill="#f2bc98"/><path d="M6.20 5.55 C5.90 2.30 7.05 1.60 8.45 1.60 C9.85 1.60 11.00 2.30 10.70 5.55 L9.90 5.35 C9.90 4.05 9.50 3.65 8.45 3.65 C7.40 3.65 7.00 4.05 7.00 5.35Z" fill="#161616"/></svg><div class="t" style="left:62.1px;top:293px;"><span style="letter-spacing:-0.263px;">Everyone</span></div><svg class="abs" style="left:40px;top:313px" width="16" height="16" viewBox="0 0 16 16"><path d="M4.10 12.60 V9.00 Q4.10 7.60 5.70 7.40 L8.45 7.20 L11.30 7.40 Q12.90 7.60 12.90 9.00 V12.60 Q12.90 13.40 11.90 13.40 H5.10 Q4.10 13.40 4.10 12.60Z" fill="url(#ub)" stroke="#176a8c" stroke-width="0.6"/><path d="M6.75 7.30 L8.45 9.80 L10.15 7.30Z" fill="#1a1a1a"/><ellipse cx="8.45" cy="4.90" rx="2.30" ry="3.30" fill="#f2bc98"/><path d="M5.90 5.50 C5.60 1.60 7.05 0.90 8.45 0.90 C9.85 0.90 11.30 1.60 11.00 5.50 L10.20 5.30 C10.20 4.00 9.80 3.60 8.45 3.60 C7.10 3.60 6.70 4.00 6.70 5.30Z" fill="#161616"/></svg><div class="t" style="left:62.1px;top:313px;"><span style="letter-spacing:-0.240px;">Factory Process and Resource Admi...</span></div><svg class="abs" style="left:40px;top:333px" width="16" height="16" viewBox="0 0 16 16"><path d="M4.10 12.60 V9.00 Q4.10 7.60 5.70 7.40 L8.45 7.20 L11.30 7.40 Q12.90 7.60 12.90 9.00 V12.60 Q12.90 13.40 11.90 13.40 H5.10 Q4.10 13.40 4.10 12.60Z" fill="url(#ub)" stroke="#176a8c" stroke-width="0.6"/><path d="M6.75 7.30 L8.45 9.80 L10.15 7.30Z" fill="#1a1a1a"/><ellipse cx="8.45" cy="4.90" rx="2.30" ry="3.30" fill="#f2bc98"/><path d="M5.90 5.50 C5.60 1.60 7.05 0.90 8.45 0.90 C9.85 0.90 11.30 1.60 11.00 5.50 L10.20 5.30 C10.20 4.00 9.80 3.60 8.45 3.60 C7.10 3.60 6.70 4.00 6.70 5.30Z" fill="#161616"/></svg><div class="t" style="left:62.1px;top:333px;"><span style="letter-spacing:-0.112px;">Inspector - Level 1</span></div><svg class="abs" style="left:40px;top:353px" width="16" height="16" viewBox="0 0 16 16"><path d="M4.10 12.60 V9.00 Q4.10 7.60 5.70 7.40 L8.45 7.20 L11.30 7.40 Q12.90 7.60 12.90 9.00 V12.60 Q12.90 13.40 11.90 13.40 H5.10 Q4.10 13.40 4.10 12.60Z" fill="url(#ub)" stroke="#176a8c" stroke-width="0.6"/><path d="M6.75 7.30 L8.45 9.80 L10.15 7.30Z" fill="#1a1a1a"/><ellipse cx="8.45" cy="4.90" rx="2.30" ry="3.30" fill="#f2bc98"/><path d="M5.90 5.50 C5.60 1.60 7.05 0.90 8.45 0.90 C9.85 0.90 11.30 1.60 11.00 5.50 L10.20 5.30 C10.20 4.00 9.80 3.60 8.45 3.60 C7.10 3.60 6.70 4.00 6.70 5.30Z" fill="#161616"/></svg><div class="t" style="left:62.1px;top:353px;"><span style="letter-spacing:-0.059px;">Inspector - Level 2</span></div><svg class="abs" style="left:40px;top:373px" width="16" height="16" viewBox="0 0 16 16"><path d="M4.10 12.60 V9.00 Q4.10 7.60 5.70 7.40 L8.45 7.20 L11.30 7.40 Q12.90 7.60 12.90 9.00 V12.60 Q12.90 13.40 11.90 13.40 H5.10 Q4.10 13.40 4.10 12.60Z" fill="url(#ub)" stroke="#176a8c" stroke-width="0.6"/><path d="M6.75 7.30 L8.45 9.80 L10.15 7.30Z" fill="#1a1a1a"/><ellipse cx="8.45" cy="4.90" rx="2.30" ry="3.30" fill="#f2bc98"/><path d="M5.90 5.50 C5.60 1.60 7.05 0.90 8.45 0.90 C9.85 0.90 11.30 1.60 11.00 5.50 L10.20 5.30 C10.20 4.00 9.80 3.60 8.45 3.60 C7.10 3.60 6.70 4.00 6.70 5.30Z" fill="#161616"/></svg><div class="t" style="left:62.1px;top:373px;"><span style="letter-spacing:0.094px;">Material Management</span></div><svg class="abs" style="left:40px;top:393px" width="16" height="16" viewBox="0 0 16 16"><path d="M4.10 12.60 V9.00 Q4.10 7.60 5.70 7.40 L8.45 7.20 L11.30 7.40 Q12.90 7.60 12.90 9.00 V12.60 Q12.90 13.40 11.90 13.40 H5.10 Q4.10 13.40 4.10 12.60Z" fill="url(#ub)" stroke="#176a8c" stroke-width="0.6"/><path d="M6.75 7.30 L8.45 9.80 L10.15 7.30Z" fill="#1a1a1a"/><ellipse cx="8.45" cy="4.90" rx="2.30" ry="3.30" fill="#f2bc98"/><path d="M5.90 5.50 C5.60 1.60 7.05 0.90 8.45 0.90 C9.85 0.90 11.30 1.60 11.00 5.50 L10.20 5.30 C10.20 4.00 9.80 3.60 8.45 3.60 C7.10 3.60 6.70 4.00 6.70 5.30Z" fill="#161616"/></svg><div class="t" style="left:62.1px;top:393px;"><span style="letter-spacing:0.084px;">NPI Office Administrator</span></div><svg class="abs" style="left:40px;top:413px" width="16" height="16" viewBox="0 0 16 16"><path d="M4.10 12.60 V9.00 Q4.10 7.60 5.70 7.40 L8.45 7.20 L11.30 7.40 Q12.90 7.60 12.90 9.00 V12.60 Q12.90 13.40 11.90 13.40 H5.10 Q4.10 13.40 4.10 12.60Z" fill="url(#ub)" stroke="#176a8c" stroke-width="0.6"/><path d="M6.75 7.30 L8.45 9.80 L10.15 7.30Z" fill="#1a1a1a"/><ellipse cx="8.45" cy="4.90" rx="2.30" ry="3.30" fill="#f2bc98"/><path d="M5.90 5.50 C5.60 1.60 7.05 0.90 8.45 0.90 C9.85 0.90 11.30 1.60 11.00 5.50 L10.20 5.30 C10.20 4.00 9.80 3.60 8.45 3.60 C7.10 3.60 6.70 4.00 6.70 5.30Z" fill="#161616"/></svg><div class="t" style="left:62.1px;top:413px;"><span style="letter-spacing:-0.003px;">Part Management</span></div><svg class="abs" style="left:40px;top:433px" width="16" height="16" viewBox="0 0 16 16"><path d="M4.10 12.60 V9.00 Q4.10 7.60 5.70 7.40 L8.45 7.20 L11.30 7.40 Q12.90 7.60 12.90 9.00 V12.60 Q12.90 13.40 11.90 13.40 H5.10 Q4.10 13.40 4.10 12.60Z" fill="url(#ub)" stroke="#176a8c" stroke-width="0.6"/><path d="M6.75 7.30 L8.45 9.80 L10.15 7.30Z" fill="#1a1a1a"/><ellipse cx="8.45" cy="4.90" rx="2.30" ry="3.30" fill="#f2bc98"/><path d="M5.90 5.50 C5.60 1.60 7.05 0.90 8.45 0.90 C9.85 0.90 11.30 1.60 11.00 5.50 L10.20 5.30 C10.20 4.00 9.80 3.60 8.45 3.60 C7.10 3.60 6.70 4.00 6.70 5.30Z" fill="#161616"/></svg><div class="t" style="left:62.1px;top:433px;"><span style="letter-spacing:0.069px;">Product Batch Administrator</span></div><svg class="abs" style="left:40px;top:453px" width="16" height="16" viewBox="0 0 16 16"><path d="M4.10 12.60 V9.00 Q4.10 7.60 5.70 7.40 L8.45 7.20 L11.30 7.40 Q12.90 7.60 12.90 9.00 V12.60 Q12.90 13.40 11.90 13.40 H5.10 Q4.10 13.40 4.10 12.60Z" fill="url(#ub)" stroke="#176a8c" stroke-width="0.6"/><path d="M6.75 7.30 L8.45 9.80 L10.15 7.30Z" fill="#1a1a1a"/><ellipse cx="8.45" cy="4.90" rx="2.30" ry="3.30" fill="#f2bc98"/><path d="M5.90 5.50 C5.60 1.60 7.05 0.90 8.45 0.90 C9.85 0.90 11.30 1.60 11.00 5.50 L10.20 5.30 C10.20 4.00 9.80 3.60 8.45 3.60 C7.10 3.60 6.70 4.00 6.70 5.30Z" fill="#161616"/></svg><div class="t" style="left:62.1px;top:453px;"><span style="letter-spacing:-0.082px;">Product Diagnostics Technician</span></div><svg class="abs" style="left:40px;top:473px" width="16" height="16" viewBox="0 0 16 16"><path d="M4.10 12.60 V9.00 Q4.10 7.60 5.70 7.40 L8.45 7.20 L11.30 7.40 Q12.90 7.60 12.90 9.00 V12.60 Q12.90 13.40 11.90 13.40 H5.10 Q4.10 13.40 4.10 12.60Z" fill="url(#ub)" stroke="#176a8c" stroke-width="0.6"/><path d="M6.75 7.30 L8.45 9.80 L10.15 7.30Z" fill="#1a1a1a"/><ellipse cx="8.45" cy="4.90" rx="2.30" ry="3.30" fill="#f2bc98"/><path d="M5.90 5.50 C5.60 1.60 7.05 0.90 8.45 0.90 C9.85 0.90 11.30 1.60 11.00 5.50 L10.20 5.30 C10.20 4.00 9.80 3.60 8.45 3.60 C7.10 3.60 6.70 4.00 6.70 5.30Z" fill="#161616"/></svg><div class="t" style="left:62.1px;top:473px;"><span style="letter-spacing:-0.135px;">QMS CAPA Admin</span></div><svg class="abs" style="left:40px;top:493px" width="16" height="16" viewBox="0 0 16 16"><path d="M4.10 12.60 V9.00 Q4.10 7.60 5.70 7.40 L8.45 7.20 L11.30 7.40 Q12.90 7.60 12.90 9.00 V12.60 Q12.90 13.40 11.90 13.40 H5.10 Q4.10 13.40 4.10 12.60Z" fill="url(#ub)" stroke="#176a8c" stroke-width="0.6"/><path d="M6.75 7.30 L8.45 9.80 L10.15 7.30Z" fill="#1a1a1a"/><ellipse cx="8.45" cy="4.90" rx="2.30" ry="3.30" fill="#f2bc98"/><path d="M5.90 5.50 C5.60 1.60 7.05 0.90 8.45 0.90 C9.85 0.90 11.30 1.60 11.00 5.50 L10.20 5.30 C10.20 4.00 9.80 3.60 8.45 3.60 C7.10 3.60 6.70 4.00 6.70 5.30Z" fill="#161616"/></svg><div class="t" style="left:62.1px;top:493px;"><span style="letter-spacing:-0.129px;">Quality and Test Engineers</span></div><svg class="abs" style="left:40px;top:513px" width="16" height="16" viewBox="0 0 16 16"><path d="M4.10 12.60 V9.00 Q4.10 7.60 5.70 7.40 L8.45 7.20 L11.30 7.40 Q12.90 7.60 12.90 9.00 V12.60 Q12.90 13.40 11.90 13.40 H5.10 Q4.10 13.40 4.10 12.60Z" fill="url(#ub)" stroke="#176a8c" stroke-width="0.6"/><path d="M6.75 7.30 L8.45 9.80 L10.15 7.30Z" fill="#1a1a1a"/><ellipse cx="8.45" cy="4.90" rx="2.30" ry="3.30" fill="#f2bc98"/><path d="M5.90 5.50 C5.60 1.60 7.05 0.90 8.45 0.90 C9.85 0.90 11.30 1.60 11.00 5.50 L10.20 5.30 C10.20 4.00 9.80 3.60 8.45 3.60 C7.10 3.60 6.70 4.00 6.70 5.30Z" fill="#161616"/></svg><div class="t" style="left:62.1px;top:513px;"><span style="letter-spacing:0.028px;">Quality System Administrator</span></div><svg class="abs" style="left:40px;top:533px" width="16" height="16" viewBox="0 0 16 16"><path d="M4.10 12.60 V9.00 Q4.10 7.60 5.70 7.40 L8.45 7.20 L11.30 7.40 Q12.90 7.60 12.90 9.00 V12.60 Q12.90 13.40 11.90 13.40 H5.10 Q4.10 13.40 4.10 12.60Z" fill="url(#ub)" stroke="#176a8c" stroke-width="0.6"/><path d="M6.75 7.30 L8.45 9.80 L10.15 7.30Z" fill="#1a1a1a"/><ellipse cx="8.45" cy="4.90" rx="2.30" ry="3.30" fill="#f2bc98"/><path d="M5.90 5.50 C5.60 1.60 7.05 0.90 8.45 0.90 C9.85 0.90 11.30 1.60 11.00 5.50 L10.20 5.30 C10.20 4.00 9.80 3.60 8.45 3.60 C7.10 3.60 6.70 4.00 6.70 5.30Z" fill="#161616"/></svg><div class="t" style="left:62.1px;top:533px;"><span style="letter-spacing:-0.220px;">Repair Technician - Level 1</span></div><svg class="abs" style="left:40px;top:553px" width="16" height="16" viewBox="0 0 16 16"><path d="M4.10 12.60 V9.00 Q4.10 7.60 5.70 7.40 L8.45 7.20 L11.30 7.40 Q12.90 7.60 12.90 9.00 V12.60 Q12.90 13.40 11.90 13.40 H5.10 Q4.10 13.40 4.10 12.60Z" fill="url(#ub)" stroke="#176a8c" stroke-width="0.6"/><path d="M6.75 7.30 L8.45 9.80 L10.15 7.30Z" fill="#1a1a1a"/><ellipse cx="8.45" cy="4.90" rx="2.30" ry="3.30" fill="#f2bc98"/><path d="M5.90 5.50 C5.60 1.60 7.05 0.90 8.45 0.90 C9.85 0.90 11.30 1.60 11.00 5.50 L10.20 5.30 C10.20 4.00 9.80 3.60 8.45 3.60 C7.10 3.60 6.70 4.00 6.70 5.30Z" fill="#161616"/></svg><div class="t" style="left:62.1px;top:553px;"><span style="letter-spacing:-0.173px;">Repair Technician - Level 2</span></div><svg class="abs" style="left:40px;top:573px" width="16" height="16" viewBox="0 0 16 16"><path d="M4.10 12.60 V9.00 Q4.10 7.60 5.70 7.40 L8.45 7.20 L11.30 7.40 Q12.90 7.60 12.90 9.00 V12.60 Q12.90 13.40 11.90 13.40 H5.10 Q4.10 13.40 4.10 12.60Z" fill="url(#ub)" stroke="#176a8c" stroke-width="0.6"/><path d="M6.75 7.30 L8.45 9.80 L10.15 7.30Z" fill="#1a1a1a"/><ellipse cx="8.45" cy="4.90" rx="2.30" ry="3.30" fill="#f2bc98"/><path d="M5.90 5.50 C5.60 1.60 7.05 0.90 8.45 0.90 C9.85 0.90 11.30 1.60 11.00 5.50 L10.20 5.30 C10.20 4.00 9.80 3.60 8.45 3.60 C7.10 3.60 6.70 4.00 6.70 5.30Z" fill="#161616"/></svg><div class="t" style="left:62.1px;top:573px;"><span style="letter-spacing:-0.126px;">Supervisor</span></div><div class="abs" style="left:58px;top:590px;width:207px;height:20px;background:#dcdcdc"></div><svg class="abs" style="left:40px;top:593px" width="16" height="16" viewBox="0 0 16 16"><path d="M4.10 12.60 V9.00 Q4.10 7.60 5.70 7.40 L8.45 7.20 L11.30 7.40 Q12.90 7.60 12.90 9.00 V12.60 Q12.90 13.40 11.90 13.40 H5.10 Q4.10 13.40 4.10 12.60Z" fill="url(#ub)" stroke="#176a8c" stroke-width="0.6"/><path d="M6.75 7.30 L8.45 9.80 L10.15 7.30Z" fill="#1a1a1a"/><ellipse cx="8.45" cy="4.90" rx="2.30" ry="3.30" fill="#f2bc98"/><path d="M5.90 5.50 C5.60 1.60 7.05 0.90 8.45 0.90 C9.85 0.90 11.30 1.60 11.00 5.50 L10.20 5.30 C10.20 4.00 9.80 3.60 8.45 3.60 C7.10 3.60 6.70 4.00 6.70 5.30Z" fill="#161616"/></svg><div class="t" style="left:62.1px;top:593px;"><span style="letter-spacing:-0.142px;">Team Lead - Floor Supervisor</span></div><svg class="abs" style="left:40px;top:613px" width="16" height="16" viewBox="0 0 16 16"><path d="M4.10 12.60 V9.00 Q4.10 7.60 5.70 7.40 L8.45 7.20 L11.30 7.40 Q12.90 7.60 12.90 9.00 V12.60 Q12.90 13.40 11.90 13.40 H5.10 Q4.10 13.40 4.10 12.60Z" fill="url(#ub)" stroke="#176a8c" stroke-width="0.6"/><path d="M6.75 7.30 L8.45 9.80 L10.15 7.30Z" fill="#1a1a1a"/><ellipse cx="8.45" cy="4.90" rx="2.30" ry="3.30" fill="#f2bc98"/><path d="M5.90 5.50 C5.60 1.60 7.05 0.90 8.45 0.90 C9.85 0.90 11.30 1.60 11.00 5.50 L10.20 5.30 C10.20 4.00 9.80 3.60 8.45 3.60 C7.10 3.60 6.70 4.00 6.70 5.30Z" fill="#161616"/></svg><div class="t" style="left:62.1px;top:613px;"><span style="letter-spacing:-0.204px;">Test Technician - Level 1</span></div><svg class="abs" style="left:40px;top:633px" width="16" height="16" viewBox="0 0 16 16"><path d="M4.10 12.60 V9.00 Q4.10 7.60 5.70 7.40 L8.45 7.20 L11.30 7.40 Q12.90 7.60 12.90 9.00 V12.60 Q12.90 13.40 11.90 13.40 H5.10 Q4.10 13.40 4.10 12.60Z" fill="url(#ub)" stroke="#176a8c" stroke-width="0.6"/><path d="M6.75 7.30 L8.45 9.80 L10.15 7.30Z" fill="#1a1a1a"/><ellipse cx="8.45" cy="4.90" rx="2.30" ry="3.30" fill="#f2bc98"/><path d="M5.90 5.50 C5.60 1.60 7.05 0.90 8.45 0.90 C9.85 0.90 11.30 1.60 11.00 5.50 L10.20 5.30 C10.20 4.00 9.80 3.60 8.45 3.60 C7.10 3.60 6.70 4.00 6.70 5.30Z" fill="#161616"/></svg><div class="t" style="left:62.1px;top:633px;"><span style="letter-spacing:-0.174px;">Test Technician - Level 2</span></div><svg class="abs" style="left:40px;top:653px" width="16" height="16" viewBox="0 0 16 16"><path d="M4.10 12.60 V9.00 Q4.10 7.60 5.70 7.40 L8.45 7.20 L11.30 7.40 Q12.90 7.60 12.90 9.00 V12.60 Q12.90 13.40 11.90 13.40 H5.10 Q4.10 13.40 4.10 12.60Z" fill="url(#ub)" stroke="#176a8c" stroke-width="0.6"/><path d="M6.75 7.30 L8.45 9.80 L10.15 7.30Z" fill="#1a1a1a"/><ellipse cx="8.45" cy="4.90" rx="2.30" ry="3.30" fill="#f2bc98"/><path d="M5.90 5.50 C5.60 1.60 7.05 0.90 8.45 0.90 C9.85 0.90 11.30 1.60 11.00 5.50 L10.20 5.30 C10.20 4.00 9.80 3.60 8.45 3.60 C7.10 3.60 6.70 4.00 6.70 5.30Z" fill="#161616"/></svg><div class="t" style="left:62.1px;top:653px;"><span style="letter-spacing:0.157px;">Work Instruction Author</span></div><div class="abs" style="left:267px;top:497px;width:2px;height:15px;background:repeating-linear-gradient(#9a9a9a 0 1px,#fff 1px 2px)"></div>
</body></html>
